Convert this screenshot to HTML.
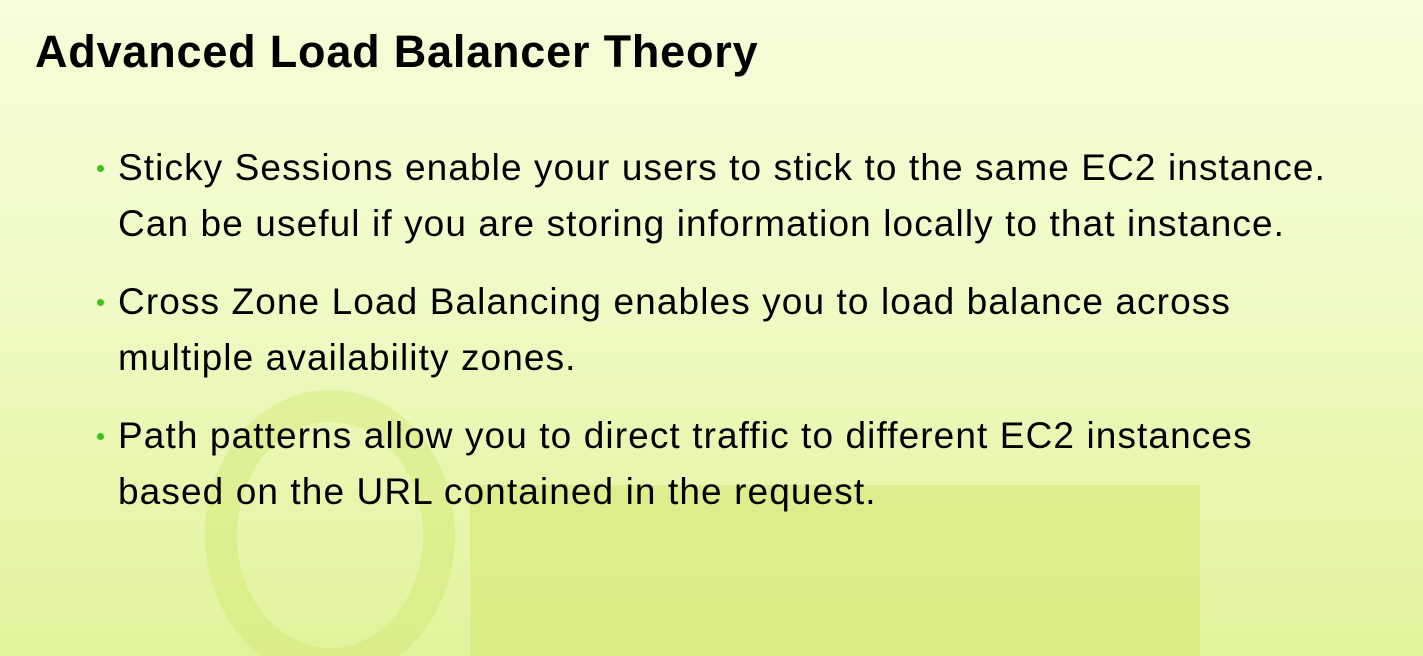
<!DOCTYPE html>
<html><head><meta charset="utf-8"><style>
html,body{margin:0;padding:0;width:1423px;height:656px;overflow:hidden}
body{position:relative;
background:linear-gradient(180deg,#f6fdd8 0%,#f0fbc8 40%,#e8f6ad 75%,#e2f39c 100%);
font-family:"Liberation Sans",sans-serif;color:#000}
.wrap{position:absolute;left:0;top:0;width:1423px;height:656px;overflow:hidden}
.deco{position:absolute}
h1{position:absolute;left:35px;top:26px;margin:0;font-size:45px;line-height:52px;font-weight:bold;letter-spacing:0.8px}
ul{position:absolute;left:118px;top:140px;margin:0;padding:0;list-style:none;width:1300px}
li{position:relative;font-size:37px;line-height:56px;margin-bottom:22px;letter-spacing:1.1px;white-space:nowrap}
li:before{content:"";position:absolute;left:-21px;top:25px;width:7px;height:7px;border-radius:50%;background:#3ec21a}
</style></head><body>
<div class="wrap">
<div class="deco" style="left:205px;top:390px;width:186px;height:226px;border-radius:50%;border:32px solid rgba(200,225,90,0.3)"></div>
<div class="deco" style="left:470px;top:485px;width:730px;height:171px;background:rgba(205,228,95,0.4)"></div>
</div>
<h1>Advanced Load Balancer Theory</h1>
<ul>
<li>Sticky Sessions enable your users to stick to the same EC2 instance.<br>Can be useful if you are storing information locally to that instance.</li>
<li>Cross Zone Load Balancing enables you to load balance across<br>multiple availability zones.</li>
<li>Path patterns allow you to direct traffic to different EC2 instances<br>based on the URL contained in the request.</li>
</ul>
</body></html>
